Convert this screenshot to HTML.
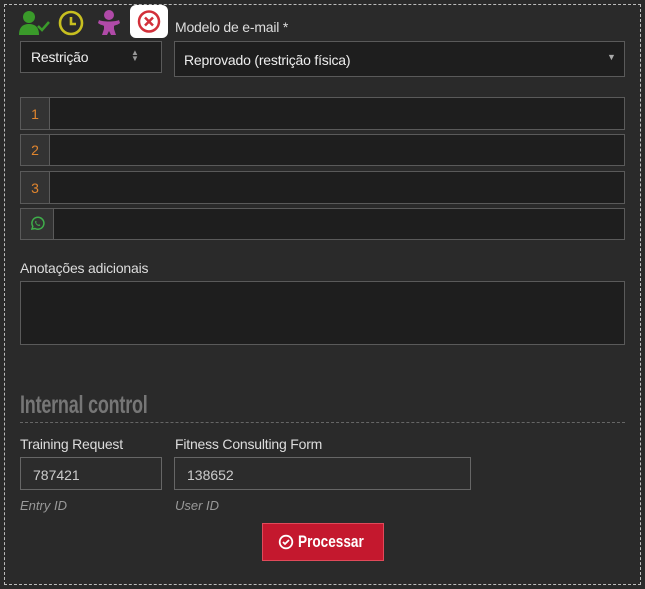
<!DOCTYPE html>
<html><head><meta charset="utf-8"><style>
*{box-sizing:border-box;margin:0;padding:0}
body{width:645px;height:589px;background:#2a2a2a;font-family:"Liberation Sans",sans-serif;color:#ddd;position:relative;overflow:hidden}
.frame{position:absolute;left:4px;top:4px;width:637px;height:581px;border:1px dashed #bbb}
.a{position:absolute}
.box{position:absolute;background:#1e1e1e;border:1px solid #5a5a5a}
.lbl{position:absolute;font-size:13px;color:#ddd;letter-spacing:-.2px}
.add{position:absolute;background:#333;border:1px solid #5a5a5a;color:#e0852e;font-size:14px;display:flex;align-items:center;justify-content:center}
.in{position:absolute;background:#2c2c2c;border:1px solid #666;color:#ccc;font-size:14px;padding:9px 0 0 12px}
.it{position:absolute;font-style:italic;font-size:13px;color:#999}
</style></head><body>
<div class="frame"></div>
<svg class="a" style="left:18px;top:10px" width="32" height="26" viewBox="0 0 32 26"><circle cx="11" cy="7" r="6" fill="#3a9a2a"/><path d="M1 25c0-8 4-11 10-11s10 3 10 11z" fill="#3a9a2a"/><path d="M20 16l4 4 7-8" stroke="#3a9a2a" stroke-width="2.5" fill="none"/></svg>
<svg class="a" style="left:57px;top:9px" width="28" height="28"><circle cx="14" cy="14" r="11" stroke="#c8c020" stroke-width="2.6" fill="none"/><path d="M14 8v7h5" stroke="#c8c020" stroke-width="2.6" fill="none"/></svg>
<svg class="a" style="left:96px;top:9px" width="26" height="28"><circle cx="13" cy="6" r="5" fill="#b04aa8"/><path d="M3 11c3 2 17 2 20 0l1 3c-2 2-5 2-6 3v3l2 6h-5l-2-4-2 4H6l2-6v-3c-1-1-4-1-6-3z" fill="#b04aa8"/></svg>
<div class="a" style="left:130px;top:5px;width:38px;height:33px;background:#fff;border-radius:6px"></div>
<svg class="a" style="left:136px;top:8px" width="26" height="27"><circle cx="13" cy="13.5" r="10" stroke="#d2303a" stroke-width="2.5" fill="none"/><path d="M9 9.5l8 8M17 9.5l-8 8" stroke="#d2303a" stroke-width="2.5"/></svg>
<div class="lbl" style="left:175px;top:19px;font-size:14px">Modelo de e-mail *</div>
<div class="box" style="left:20px;top:41px;width:142px;height:32px"></div>
<div class="lbl" style="left:31px;top:49px;font-size:14px;color:#eee">Restrição</div>
<div class="a" style="left:131px;top:50px;font-size:8px;color:#999;line-height:6px">▲<br>▼</div>
<div class="box" style="left:174px;top:41px;width:451px;height:36px"></div>
<div class="lbl" style="left:184px;top:52px;font-size:14px;color:#eee">Reprovado (restrição física)</div>
<div class="a" style="left:607px;top:52px;font-size:9px;color:#aaa">▼</div>

<div class="box" style="left:20px;top:97px;width:605px;height:33px"></div><div class="add" style="left:20px;top:97px;width:30px;height:33px">1</div>
<div class="box" style="left:20px;top:134px;width:605px;height:32px"></div><div class="add" style="left:20px;top:134px;width:30px;height:32px">2</div>
<div class="box" style="left:20px;top:171px;width:605px;height:33px"></div><div class="add" style="left:20px;top:171px;width:30px;height:33px">3</div>
<div class="box" style="left:20px;top:208px;width:605px;height:32px"></div><div class="add" style="left:20px;top:208px;width:34px;height:32px"><svg width="16" height="16" viewBox="0 0 16 16"><path d="M3 13l.8-2.6A6 6 0 1 1 6 12.5z" stroke="#3fae4a" stroke-width="1.5" fill="none"/><path d="M6 5.5c0 2 2 4.5 4.5 4.5l.8-1-1.3-.7-.6.6c-1-.4-1.9-1.3-2.3-2.3l.6-.6-.7-1.3z" fill="#3fae4a"/></svg></div>

<div class="lbl" style="left:20px;top:260px;font-size:14px">Anotações adicionais</div>
<div class="box" style="left:20px;top:281px;width:605px;height:64px"></div>

<div class="a" style="left:20px;top:391px;font-size:25px;font-weight:bold;color:#767676;transform:scaleX(.72);transform-origin:left;letter-spacing:-.3px">Internal control</div>
<div class="a" style="left:20px;top:422px;width:605px;border-top:1px dashed #666"></div>

<div class="lbl" style="left:20px;top:436px;font-size:14px">Training Request</div>
<div class="lbl" style="left:175px;top:436px;font-size:14px">Fitness Consulting Form</div>
<div class="in" style="left:20px;top:457px;width:142px;height:33px">787421</div>
<div class="in" style="left:174px;top:457px;width:297px;height:33px">138652</div>
<div class="it" style="left:20px;top:498px">Entry ID</div>
<div class="it" style="left:175px;top:498px">User ID</div>
<div class="a" style="left:262px;top:523px;width:122px;height:38px;background:#c4182e;border:1px solid #e04a5a;color:#fff;font-weight:bold;font-size:17px;display:flex;align-items:center;justify-content:center;gap:4px"><svg width="16" height="16"><circle cx="8" cy="8" r="6.3" stroke="#fff" stroke-width="1.8" fill="none"/><path d="M5 8l2 2 4-4" stroke="#fff" stroke-width="1.8" fill="none"/></svg><span style="display:inline-block;transform:scaleX(.8);transform-origin:left;width:70px">Processar</span></div>
</body></html>
